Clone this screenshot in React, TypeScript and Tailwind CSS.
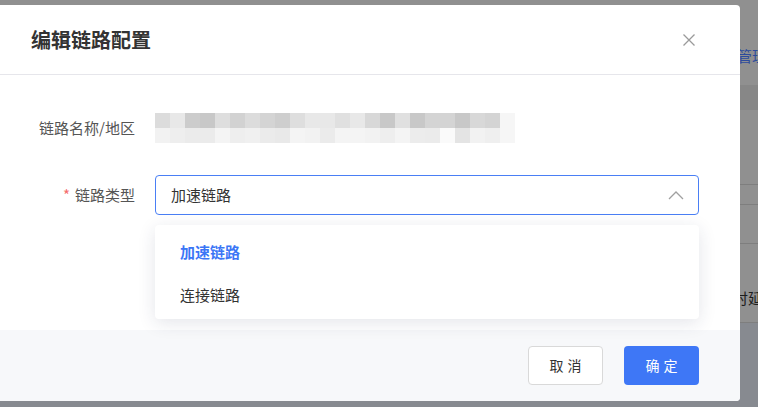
import React from "react";

const cjk = { fontFamily: '"Noto Sans CJK SC", "Noto Sans", sans-serif' };

const row1 = ["#dcdcdc","#e8e8e8","#cccccc","#c8c8c8","#dedede","#d2d2d2","#dcdcdc","#d4d4d4","#cecece","#dedede","#e8e8e8","#e8e8e8","#e0e0e0","#e8e8e8","#d8d8d8","#c8c8c8","#e0e0e0","#c8c8c8","#d4d4d4","#d4d4d4","#c8c8c8","#d8d8d8","#d4d4d4","#f6f6f6"];
const row2 = ["#f2f2f2","#eeeeee","#ebebeb","#ebebeb","#f4f4f4","#eeeeee","#f0f0f0","#ebebeb","#e9e9e9","#f4f4f4","#f2f2f2","#ebebeb","#f4f4f4","#f4f4f4","#f2f2f2","#eeeeee","#f4f4f4","#ececec","#ebebeb","#fafafa","#e4e4e4","#f2f2f2","#efefef","#f6f6f6"];

// mosaic that hides the real link name
const Mosaic = () => (
  <div className="flex flex-col">
    {[row1, row2].map((r, i) => (
      <div key={i} className="flex">
        {r.map((c, j) => (
          <div key={j} className="w-[15px] h-[15px]" style={{ backgroundColor: c }} />
        ))}
      </div>
    ))}
  </div>
);

// page behind the overlay, only its right edge shows
const BackPage = () => (
  <div className="flex flex-col w-full h-full bg-[#909090]" style={cjk}>
    <div className="h-[47px]" />
    <div className="h-[18px] pl-[737px] text-[15px] leading-[18px] text-[#2d4b9c] whitespace-nowrap">管理</div>
    <div className="h-[20px]" />
    <div className="h-[25px] bg-[#878787]" />
    <div className="h-[74px]" />
    <div className="h-[20px] border-t border-[#7e7e7e]" />
    <div className="h-[39px] border-t border-[#7e7e7e]" />
    <div className="h-[40px] border-t border-[#7e7e7e]" />
    <div className="h-[39px] pl-[733px] pt-[5px] text-[15px] leading-[20px] text-[#1c1c1c] whitespace-nowrap">时延</div>
    <div className="flex-1 border-t border-[#7e7e7e] bg-[#878a90]" />
  </div>
);

export default function App() {
  return (
    <div className="relative w-[758px] h-[407px] overflow-hidden" style={cjk}>
      <BackPage />

      {/* modal, its left edge runs past the window */}
      <div className="absolute left-[-20px] top-[5px] w-[760px] h-[396px] bg-white rounded-[4px] flex flex-col">
        <div className="h-[70px] flex items-center justify-between pl-[51px] pr-[44px] border-b border-[#e6e6eb] shrink-0">
          <span className="text-[20px] font-bold text-[#333333]">编辑链路配置</span>
          <svg width="14" height="14" viewBox="0 0 14 14" className="text-[#9a9a9a]">
            <path d="M1.5 1.5 L12.5 12.5 M12.5 1.5 L1.5 12.5" stroke="currentColor" strokeWidth="1.3" fill="none" />
          </svg>
        </div>

        <div className="relative flex-1 flex flex-col pt-[38px]">
          <div className="flex items-center">
            <div className="w-[175px] pr-[20px] text-right text-[15px] text-[#555555] whitespace-nowrap">链路名称/地区</div>
            <Mosaic />
          </div>

          <div className="flex items-center mt-[32px]">
            <div className="w-[175px] pr-[20px] text-right text-[15px] text-[#555555] whitespace-nowrap">
              <span className="text-[#f56c6c] mr-[5px]">*</span>链路类型
            </div>
            <div className="relative">
              <div className="w-[544px] h-[40px] border border-[#4a7ff5] rounded-[4px] flex items-center justify-between pl-[15px] pr-[14px]">
                <span className="text-[15px] text-[#333333]">加速链路</span>
                <svg width="16" height="10" viewBox="0 0 16 10" className="text-[#a0a0a0]">
                  <polyline points="1,9 8,2 15,9" stroke="currentColor" strokeWidth="1.3" fill="none" />
                </svg>
              </div>

              {/* open dropdown */}
              <div className="absolute left-0 top-[50px] w-[544px] h-[94px] bg-white rounded-[4px] shadow-[0_4px_18px_rgba(30,40,80,0.12)] z-10 flex flex-col pt-[6px]">
                <div className="h-[43px] flex items-center pl-[25px] text-[15px] font-bold text-[#3b76f6]">加速链路</div>
                <div className="h-[43px] flex items-center pl-[25px] text-[15px] text-[#333333]">连接链路</div>
              </div>
            </div>
          </div>
        </div>

        <div className="h-[71px] shrink-0 bg-[#f7f8fa] rounded-b-[4px] flex items-center justify-end gap-[21px] pr-[41px]">
          <button className="w-[75px] h-[39px] bg-white border border-[#d9d9d9] rounded-[4px] text-[14px] text-[#333333] tracking-[4px] pl-[4px]">取消</button>
          <button className="w-[75px] h-[39px] bg-[#3e77f6] rounded-[4px] text-[14px] text-white tracking-[4px] pl-[4px]">确定</button>
        </div>
      </div>
    </div>
  );
}
